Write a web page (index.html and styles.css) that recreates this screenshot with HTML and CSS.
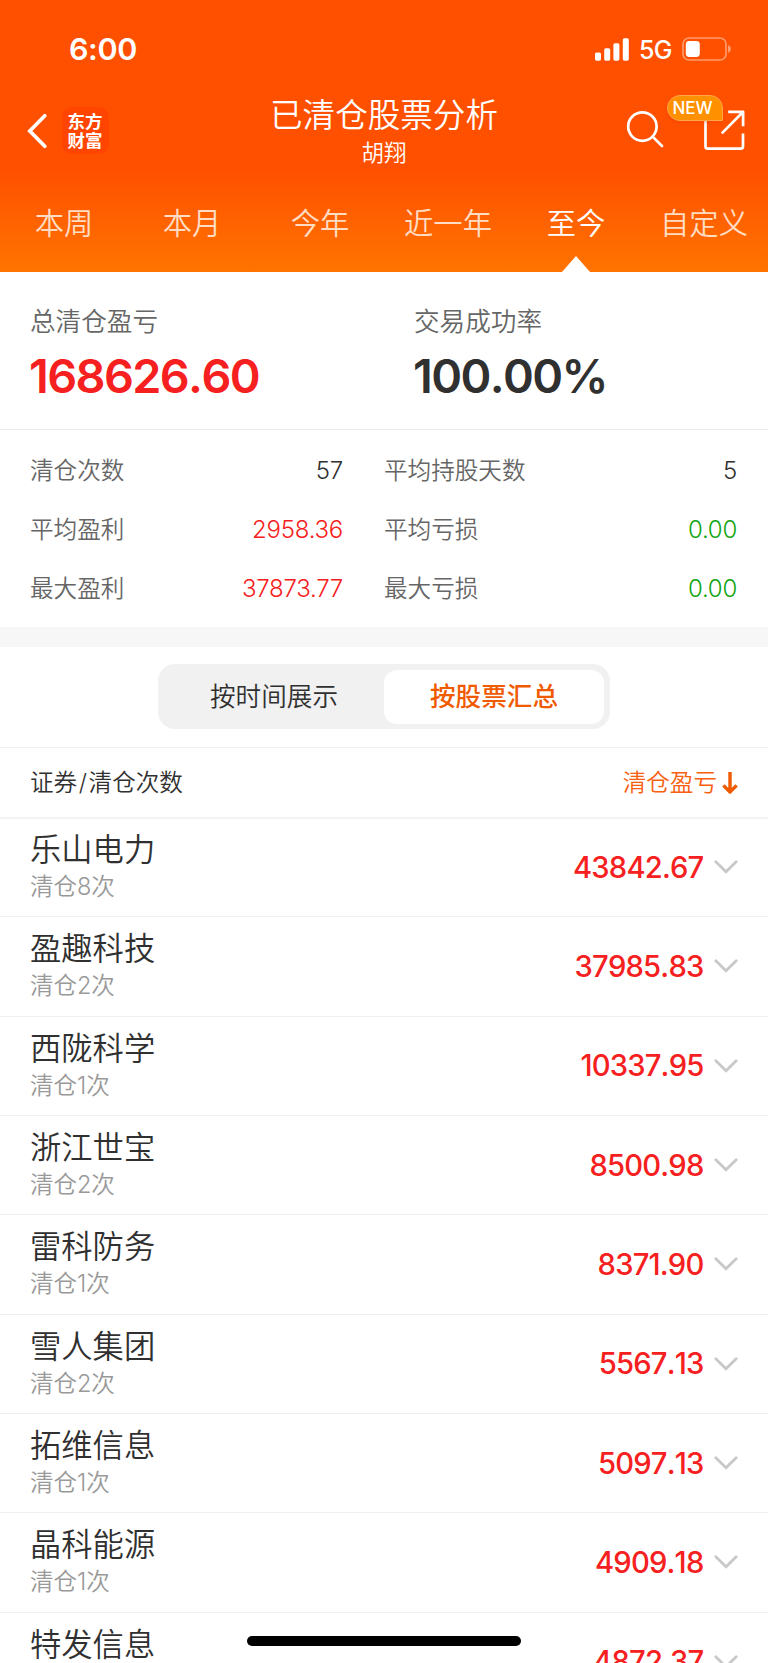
FILE: index.html
```html
<!DOCTYPE html>
<html lang="zh-CN">
<head>
<meta charset="utf-8">
<title>已清仓股票分析</title>
<link rel="stylesheet" href="styles.css">
</head>
<body>
<div class="screen">
  <header class="header">
    <div class="status">
      <span class="time">6:00</span>
      <div class="status-icons">
        <svg class="signal" width="34" height="23" viewBox="0 0 34 23" fill="#fff"><rect x="0" y="14.5" width="6" height="8.2" rx="1.6"/><rect x="9.2" y="10.3" width="6" height="12.4" rx="1.6"/><rect x="18.4" y="5.3" width="6" height="17.4" rx="1.6"/><rect x="27.8" y="0.2" width="6" height="22.5" rx="1.6"/></svg>
        <span class="network">5G</span>
        <svg class="battery" width="50" height="24" viewBox="0 0 50 24"><rect x="1" y="1" width="43" height="22" rx="6" fill="none" stroke="#fff" stroke-opacity=".42" stroke-width="1.7"/><rect x="3.8" y="4" width="14" height="16" rx="3.4" fill="#fff"/><path d="M46.2 8.3c3.4 1.2 3.4 6.2 0 7.4z" fill="#fff" fill-opacity=".5"/></svg>
      </div>
    </div>
    <div class="nav">
      <div class="nav-left">
        <svg width="22" height="36" viewBox="0 0 22 36"><path d="M18.8 2.7 3.8 18l15 15.3" fill="none" stroke="#fff" stroke-width="3.7" stroke-linecap="round"/></svg>
        <div class="logo"><span>东方</span><span>财富</span></div>
      </div>
      <div class="titles">
        <h1 class="title">已清仓股票分析</h1>
        <div class="subtitle">胡翔</div>
      </div>
      <div class="nav-right">
        <svg width="38" height="38" viewBox="0 0 38 38" fill="none" stroke="#fff" stroke-width="2.7" stroke-linecap="round"><circle cx="16.4" cy="16.6" r="14.2"/><path d="m26.6 26.6 9.4 9.4"/></svg>
        <div class="share">
          <svg width="42" height="42" viewBox="0 0 42 42" fill="none" stroke="#fff" stroke-width="2.7" stroke-linejoin="round"><path d="M2.5 9v28.2q0 2.5 2.5 2.5h32.5q2.5 0 2.5-2.5V24.5M25.2 2.8h14.9v14.4M39.2 3.7 18.8 24.4"/></svg>
          <span class="badge">NEW</span>
        </div>
      </div>
    </div>
    <nav class="tabs">
      <span class="tab">本周</span><span class="tab">本月</span><span class="tab">今年</span><span class="tab">近一年</span><span class="tab active">至今</span><span class="tab">自定义</span>
    </nav>
  </header>

  <section class="summary">
    <div><div class="label">总清仓盈亏</div><div class="figure red">168626.60</div></div>
    <div><div class="label">交易成功率</div><div class="figure">100.00%</div></div>
  </section>

  <section class="stats">
    <div class="stat"><span>清仓次数</span><b>57</b></div>
    <div class="stat"><span>平均持股天数</span><b>5</b></div>
    <div class="stat"><span>平均盈利</span><b class="red">2958.36</b></div>
    <div class="stat"><span>平均亏损</span><b class="green">0.00</b></div>
    <div class="stat"><span>最大盈利</span><b class="red">37873.77</b></div>
    <div class="stat"><span>最大亏损</span><b class="green">0.00</b></div>
  </section>

  <section class="switch-row">
    <div class="switch"><span class="option">按时间展示</span><span class="option selected">按股票汇总</span></div>
  </section>

  <div class="list-head">
    <span>证券<span class="slash">/</span>清仓次数</span>
    <span class="sort">清仓盈亏<svg width="16" height="24" viewBox="0 0 16 24" fill="none" stroke="#f05a00" stroke-width="3.4"><path d="M8 1v20M1.4 14.4 8 21l6.6-6.6" stroke-linejoin="round"/></svg></span>
  </div>

  <svg class="defs" width="0" height="0"><symbol id="chevron" viewBox="0 0 24 14"><path d="m1.8 1.8 10.2 10 10.2-10" fill="none" stroke="#c8c8c8" stroke-width="2.8" stroke-linecap="round"/></symbol></svg>

  <main class="list">
    <div class="row"><div><div class="name">乐山电力</div><div class="count">清仓8次</div></div><div class="value">43842.67<svg class="chev"><use href="#chevron"/></svg></div></div>
    <div class="row"><div><div class="name">盈趣科技</div><div class="count">清仓2次</div></div><div class="value">37985.83<svg class="chev"><use href="#chevron"/></svg></div></div>
    <div class="row"><div><div class="name">西陇科学</div><div class="count">清仓1次</div></div><div class="value">10337.95<svg class="chev"><use href="#chevron"/></svg></div></div>
    <div class="row"><div><div class="name">浙江世宝</div><div class="count">清仓2次</div></div><div class="value">8500.98<svg class="chev"><use href="#chevron"/></svg></div></div>
    <div class="row"><div><div class="name">雷科防务</div><div class="count">清仓1次</div></div><div class="value">8371.90<svg class="chev"><use href="#chevron"/></svg></div></div>
    <div class="row"><div><div class="name">雪人集团</div><div class="count">清仓2次</div></div><div class="value">5567.13<svg class="chev"><use href="#chevron"/></svg></div></div>
    <div class="row"><div><div class="name">拓维信息</div><div class="count">清仓1次</div></div><div class="value">5097.13<svg class="chev"><use href="#chevron"/></svg></div></div>
    <div class="row"><div><div class="name">晶科能源</div><div class="count">清仓1次</div></div><div class="value">4909.18<svg class="chev"><use href="#chevron"/></svg></div></div>
    <div class="row"><div><div class="name">特发信息</div></div><div class="value">4872.37<svg class="chev"><use href="#chevron"/></svg></div></div>
  </main>
  <div class="home-bar"></div>
</div>
</body>
</html>
```
FILE: styles.css
```css
* { box-sizing: border-box; }
body {
  margin: 0;
  background: #fff;
  color: #303030;
  font-family: Inter, "Noto Sans CJK SC", sans-serif;
  font-weight: 350;
}
.screen { position: relative; width: 768px; height: 1663px; overflow: hidden; }
.red { color: #f62020; }
.green { color: #10a510; }

.header {
  height: 272px;
  color: #fff;
  background: linear-gradient(#ff5000 0, #ff5000 170px, #ff7400 272px);
}
.status {
  display: flex;
  justify-content: space-between;
  align-items: center;
  height: 98px;
  padding: 0 36px 0 69px;
}
.time { margin-top: -2px; font-size: 30.5px; font-weight: 600; letter-spacing: -.4px; }
.status-icons { display: flex; align-items: center; }
.network { width: 32px; margin: 2px 11px 0 10px; font-size: 25px; font-weight: 450; letter-spacing: -.8px; white-space: nowrap; }

.nav { display: grid; grid-template-columns: 1fr 240px 1fr; height: 86px; }
.nav-left { display: flex; align-items: flex-start; gap: 14px; padding: 9px 0 0 27.5px; }
.nav-left > svg { margin-top: 6px; margin-left: -2px; }
.logo {
  display: flex;
  flex-direction: column;
  align-items: center;
  justify-content: center;
  width: 47px;
  height: 47px;
  border-radius: 10px;
  background: #ff4500;
  font-size: 17.5px;
  font-weight: 700;
  line-height: 19px;
}
.titles { text-align: center; white-space: nowrap; }
.title { margin: 0; font-size: 32.6px; font-weight: 350; line-height: 34px; }
.subtitle { margin-top: 8px; font-size: 22.5px; line-height: 25px; }
.nav-right { display: flex; justify-content: flex-end; padding: 11px 23px 0 0; gap: 39px; }
.nav-right > svg { margin-top: 1px; }
.share { position: relative; width: 42px; height: 42px; }
.badge {
  position: absolute;
  left: -36.5px;
  top: -14px;
  width: 56px;
  height: 26px;
  padding-right: 4px;
  border: 1.5px solid #ffa64a;
  border-radius: 13px 13px 0 13px;
  background: #ff9100;
  box-shadow: 0 2px 3px rgba(220, 50, 0, .25);
  font-size: 17px;
  font-weight: 500;
  line-height: 24px;
  text-align: center;
}

.tabs { display: grid; grid-template-columns: repeat(6, 128px); height: 88px; }
.tab {
  position: relative;
  color: #ffdcc2;
  font-size: 29.3px;
  line-height: 79px;
  text-align: center;
  white-space: nowrap;
}
.tab.active { color: #fff; }
.tab.active::after {
  content: "";
  position: absolute;
  left: 50px;
  bottom: 0;
  border: 14px solid transparent;
  border-top: 0;
  border-bottom: 16px solid #fff;
}

.summary {
  display: grid;
  grid-template-columns: 1fr 1fr;
  height: 158px;
  padding: 33px 0 0 30px;
  border-bottom: 1px solid #e9e9e9;
}
.summary > div + div { padding-left: 15px; }
.label { color: #666; font-size: 25.6px; line-height: 34px; }
.figure { margin: 13px 0 0 -1px; font-size: 46.8px; font-weight: 600; line-height: 48px; letter-spacing: -1.6px; font-kerning: none; }

.stats {
  display: grid;
  grid-template-columns: 343px 384px;
  grid-auto-rows: 59px;
  height: 197px;
  padding-top: 11px;
}
.stat { display: flex; justify-content: space-between; align-items: center; padding-left: 30px; line-height: 34px; }
.stat:nth-child(even) { padding-left: 41px; margin-right: -10px; }
.stat span { color: #666; font-size: 23.6px; }
.stat b { font-size: 24px; font-weight: 350; letter-spacing: -.25px; }

.switch-row {
  display: flex;
  justify-content: center;
  height: 121px;
  padding-top: 17px;
  border-top: 20px solid #f7f7f7;
  border-bottom: 1px solid #f0f0f0;
}
.switch {
  display: grid;
  grid-template-columns: 1fr 1fr;
  width: 452px;
  height: 65px;
  padding: 6px;
  border-radius: 17px;
  background: #f1f1f1;
}
.option { font-size: 25.6px; line-height: 54px; text-align: center; }
.option.selected { border-radius: 13px; background: #fff; color: #f05a00; font-weight: 500; }

.list-head {
  display: flex;
  justify-content: space-between;
  align-items: center;
  height: 71px;
  padding: 0 30px;
  border-bottom: 2px solid #f4f4f4;
  font-size: 23.6px;
  line-height: 34px;
}
.slash { padding: 0 1.6px; }
.sort { display: flex; align-items: center; gap: 5px; color: #f86010; }
.defs { position: absolute; }
.list { margin-top: -1px; }
.row {
  display: flex;
  justify-content: space-between;
  height: 99.35px;
  padding: 13px 30px 0;
  border-bottom: 1px solid #f0f0f0;
}
.name { font-size: 31.3px; line-height: 38px; }
.count { color: #999; font-size: 23.6px; line-height: 36px; letter-spacing: -.1px; }
.value {
  display: flex;
  align-items: center;
  gap: 10.5px;
  height: 72px;
  color: #f62020;
  font-size: 29.2px;
  font-weight: 550;
  letter-spacing: -.8px;
  font-kerning: none;
}
.chev { width: 24px; height: 14px; }
.home-bar {
  position: absolute;
  left: 247px;
  top: 1636px;
  width: 274px;
  height: 10px;
  border-radius: 5px;
  background: #000;
}
```
